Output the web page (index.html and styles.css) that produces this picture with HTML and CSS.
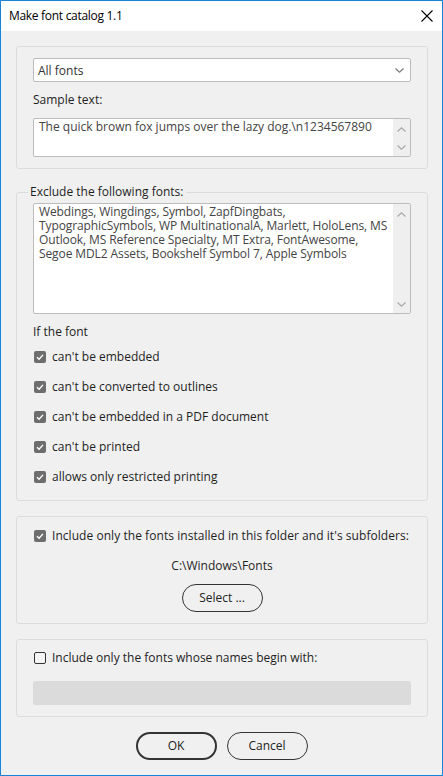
FILE: index.html
```html
<!DOCTYPE html>
<html>
<head>
<meta charset="utf-8">
<link rel="stylesheet" href="styles.css">
</head>
<body>
<div class="window">
  <div class="titlebar">
    <span class="title">Make font catalog 1.1</span>
    <svg class="close" width="12" height="12" viewBox="0 0 12 12"><path d="M0.5 0.5 L11.5 11.5 M11.5 0.5 L0.5 11.5" stroke="#000" stroke-width="1.1" fill="none"/></svg>
  </div>
  <div class="content">
    <div class="panel p1">
      <div class="select">
        <span>All fonts</span>
        <svg width="9" height="5" viewBox="0 0 9 5"><path d="M0.5 0.5 L4.5 4.2 L8.5 0.5" stroke="#7a7a7a" stroke-width="1.1" fill="none"/></svg>
      </div>
      <div class="label">Sample text:</div>
      <div class="textbox tb1">
        <div class="tb-text">The quick brown fox jumps over the lazy dog.\n1234567890</div>
        <div class="scroll">
          <svg width="9" height="5" viewBox="0 0 9 5"><path d="M0.5 4.5 L4.5 0.8 L8.5 4.5" stroke="#a8a8a8" stroke-width="1.2" fill="none"/></svg>
          <svg width="9" height="5" viewBox="0 0 9 5"><path d="M0.5 0.5 L4.5 4.2 L8.5 0.5" stroke="#a8a8a8" stroke-width="1.2" fill="none"/></svg>
        </div>
      </div>
    </div>

    <fieldset class="panel p2">
      <legend>Exclude the following fonts:</legend>
      <div class="textbox tb2">
        <div class="tb-text">Webdings, Wingdings, Symbol, ZapfDingbats, TypographicSymbols, WP MultinationalA, Marlett, HoloLens, MS Outlook, MS Reference Specialty, MT Extra, FontAwesome, Segoe MDL2 Assets, Bookshelf Symbol 7, Apple Symbols</div>
        <div class="scroll">
          <svg width="9" height="5" viewBox="0 0 9 5"><path d="M0.5 4.5 L4.5 0.8 L8.5 4.5" stroke="#a8a8a8" stroke-width="1.2" fill="none"/></svg>
          <svg width="9" height="5" viewBox="0 0 9 5"><path d="M0.5 0.5 L4.5 4.2 L8.5 0.5" stroke="#a8a8a8" stroke-width="1.2" fill="none"/></svg>
        </div>
      </div>
      <div class="label if-label">If the font</div>
      <ul class="checks">
        <li class="check-row"><span class="cb on"><svg width="12" height="12" viewBox="0 0 12 12"><path d="M3 6.2 L5.1 8.3 L9 3.9" stroke="#fff" stroke-width="1.4" fill="none"/></svg></span>can't be embedded</li>
        <li class="check-row"><span class="cb on"><svg width="12" height="12" viewBox="0 0 12 12"><path d="M3 6.2 L5.1 8.3 L9 3.9" stroke="#fff" stroke-width="1.4" fill="none"/></svg></span>can't be converted to outlines</li>
        <li class="check-row"><span class="cb on"><svg width="12" height="12" viewBox="0 0 12 12"><path d="M3 6.2 L5.1 8.3 L9 3.9" stroke="#fff" stroke-width="1.4" fill="none"/></svg></span>can't be embedded in a PDF document</li>
        <li class="check-row"><span class="cb on"><svg width="12" height="12" viewBox="0 0 12 12"><path d="M3 6.2 L5.1 8.3 L9 3.9" stroke="#fff" stroke-width="1.4" fill="none"/></svg></span>can't be printed</li>
        <li class="check-row"><span class="cb on"><svg width="12" height="12" viewBox="0 0 12 12"><path d="M3 6.2 L5.1 8.3 L9 3.9" stroke="#fff" stroke-width="1.4" fill="none"/></svg></span>allows only restricted printing</li>
      </ul>
    </fieldset>

    <div class="panel p3">
      <div class="check-row wide"><span class="cb on"><svg width="12" height="12" viewBox="0 0 12 12"><path d="M3 6.2 L5.1 8.3 L9 3.9" stroke="#fff" stroke-width="1.4" fill="none"/></svg></span>Include only the fonts installed in this folder and it's subfolders:</div>
      <div class="path">C:\Windows\Fonts</div>
      <div class="center"><button class="btn">Select ...</button></div>
    </div>

    <div class="panel p4">
      <div class="check-row"><span class="cb off"></span>Include only the fonts whose names begin with:</div>
      <div class="disabled-input"></div>
    </div>

    <div class="buttons">
      <button class="btn default">OK</button>
      <button class="btn">Cancel</button>
    </div>
  </div>
</div>
</body>
</html>
```

FILE: styles.css
```css
* { box-sizing: border-box; }
html, body { margin: 0; padding: 0; }
body {
  font-family: "Open Sans", "Noto Sans", sans-serif;
  font-size: 12px;
  color: #1e1e1e;
  background: #f0f0f0;
}
.window {
  width: 443px;
  height: 776px;
  border: 1px solid #1883d7;
  display: flex;
  flex-direction: column;
  background: #f0f0f0;
}
.titlebar {
  height: 30px;
  background: #fff;
  display: flex;
  align-items: center;
  justify-content: space-between;
  padding: 0 9px 0 8px;
  flex-shrink: 0;
}
.title { font-size: 12px; color: #000; line-height: 16px; letter-spacing: -0.3px; }
.close { display: block; margin-right: 0; }
.content {
  flex: 1;
  padding: 15px 14px 0 15px;
}
.panel {
  border: 1px solid #dcdcdc;
  border-radius: 3px;
  padding: 0 16px;
  margin: 0 0 15px 0;
}
.label { line-height: 16px; color: #1e1e1e; }

.p1 { padding-top: 11px; padding-bottom: 11px; }
.select {
  height: 24px;
  background: #fff;
  border: 1px solid #bcbcbc;
  border-radius: 2px;
  display: flex;
  align-items: center;
  justify-content: space-between;
  padding: 0 6px 0 4px;
  color: #333;
}
.select svg { display: block; }
.p1 .label { margin: 10px 0; }

.textbox {
  background: #fff;
  border: 1px solid #bcbcbc;
  border-radius: 2px;
  display: flex;
  color: #444;
}
.tb-text {
  flex: 1;
  padding: 1px 0 0 5px;
  line-height: 14px;
}
.scroll {
  width: 17px;
  background: #efefef;
  display: flex;
  flex-direction: column;
  justify-content: space-between;
  align-items: center;
  padding: 8px 0 6px;
  flex-shrink: 0;
}
.scroll svg { display: block; }
.tb1 { height: 39px; }
.tb2 { height: 111px; }
.tb2 .tb-text { letter-spacing: -0.1px; }

fieldset.panel {
  margin: 0 0 15px 0;
  min-width: 0;
  padding: 3px 16px 8px;
}
legend {
  padding: 0 3px 0 2px;
  margin-left: -5px;
  line-height: 16px;
  color: #1e1e1e;
}
.if-label { margin-top: 10px; }
.checks { list-style: none; margin: 2px 0 0; padding: 0; }
.check-row {
  display: flex;
  align-items: center;
  line-height: 16px;
  color: #1e1e1e;
}
.check-row.wide { letter-spacing: 0.05px; }
.checks .check-row { height: 30px; }
.cb {
  width: 12px;
  height: 12px;
  border-radius: 2px;
  margin-right: 6px;
  flex-shrink: 0;
  margin-left: 1px;
}
.cb svg { display: block; }
.cb.on { background: #6d6d6d; }
.cb.off { border: 1px solid #333; background: #f4f4f4; }

.p3 { padding-top: 11px; padding-bottom: 11px; }
.path { text-align: center; margin-top: 14px; line-height: 16px; color: #1e1e1e; }
.center { display: flex; justify-content: center; margin-top: 10px; }
.btn {
  font-family: inherit;
  font-size: 12px;
  color: #222;
  width: 81px;
  height: 28px;
  border: 1px solid #333;
  border-radius: 14px;
  background: #f0f0f0;
  padding: 0;
  line-height: 16px;
}
.btn.default { border: 2px solid #333; }

.p4 { padding-top: 10px; padding-bottom: 11px; }
.disabled-input {
  height: 24px;
  margin-top: 15px;
  background: #dbdbdb;
  border-radius: 2px;
}
.buttons {
  display: flex;
  justify-content: center;
  gap: 10px;
  margin-top: 0;
  padding-right: 1px;
}
```
